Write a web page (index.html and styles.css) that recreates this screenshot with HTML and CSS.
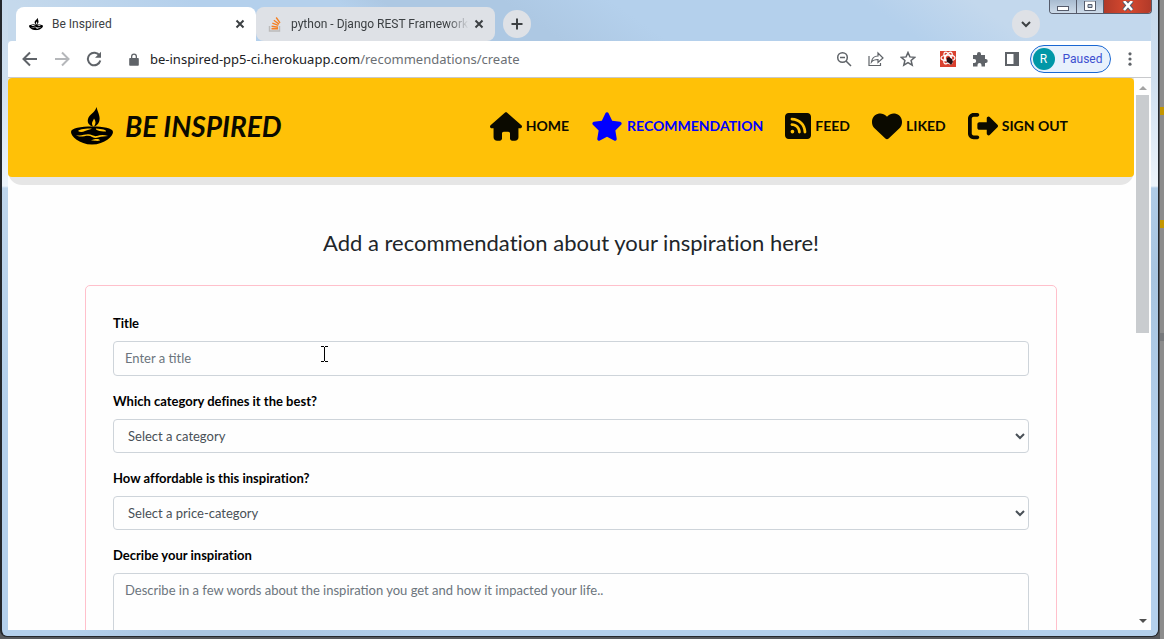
FILE: index.html
```html
<!DOCTYPE html>
<html lang="en">
<head>
<meta charset="utf-8">
<meta name="viewport" content="width=device-width, initial-scale=1">
<title>Be Inspired</title>
<link rel="stylesheet" href="styles.css">
</head>
<body>
<svg class="defs" aria-hidden="true">
  <symbol id="lamp" viewBox="0 0 42 38">
    <path d="M25.500 0C27 6 30 10 28 15c-1 2.500-3 4-5 4.500 2-3 2-5 0-8-.5 2-2 3-2 5 0 1.200.4 2 1 3-4-1-6-4-5-7.500C18 7.500 24 6 25.500 0Z"/>
    <path fill-rule="evenodd" d="M21 19.500C32 19.500 42 21 42 25c0 4-8 12.500-21 12.500S0 29 0 25c0-4 10-5.500 21-5.500ZM7 24c2 1.500 5 1 7 0 3-1.200 5-1.500 7-2.500-6 0-12 .5-14 2.500Zm18-2.500c-1 1.500 3 3 10 3 1-1.500-4-2.700-10-3ZM5 28c4 3 8 .8 12 .8s6 3.500 10 1.800c4-1.600 7-.8 10-1.600-5-1.500-8-.8-11 0s-5-1.700-9-1.700-7 2.200-12 .7Zm15 5.500c4 0 6 1 9 0-1-1.700-4-2-9 0Z"/>
  </symbol>
</svg>
<div class="window">
  <div class="tabstrip">
    <div class="tab active">
      <svg class="favicon lamp" viewBox="0 0 42 38"><use href="#lamp"/></svg>
      <span class="tab-title">Be Inspired</span>
      <button class="tab-close" aria-label="Close tab"><svg viewBox="0 0 10 10"><path d="M1.500 1.500l7 7M8.500 1.500l-7 7"/></svg></button>
    </div>
    <div class="tab">
      <svg class="favicon" viewBox="0 0 14 16"><path d="M1.500 10v5h10v-5" fill="none" stroke="#bcbbbb" stroke-width="1.400"/><path d="M3.500 12.800h6.500M3.600 10.200l6.400 1M4.300 7.200l6 2.200M5.800 4.300l5.300 3.800M8.200 1.500l3.800 5.400" fill="none" stroke="#f48024" stroke-width="1.400"/></svg>
      <span class="tab-title faded">python - Django REST Framework</span>
      <button class="tab-close" aria-label="Close tab"><svg viewBox="0 0 10 10"><path d="M1.500 1.500l7 7M8.500 1.500l-7 7"/></svg></button>
    </div>
    <button class="round new-tab" aria-label="New tab"><svg viewBox="0 0 12 12"><path d="M6 0.500v11M.5 6h11"/></svg></button>
    <button class="round tab-search" aria-label="Search tabs"><svg viewBox="0 0 12 12"><path d="M2 4l4 4 4-4"/></svg></button>
    <div class="caption">
      <button class="cap" aria-label="Minimize"><svg viewBox="0 0 12 12"><rect x=".5" y="5.500" width="11" height="4" fill="#fff" stroke="#555b6b"/></svg></button>
      <button class="cap" aria-label="Maximize"><svg viewBox="0 0 12 12"><path fill-rule="evenodd" d="M.5 0h11v9.500H.5ZM4 3.500v3h4v-3Z" fill="#fff" stroke="#555b6b"/></svg></button>
      <button class="cap close" aria-label="Close"><svg viewBox="0 0 12 12"><path d="M2 0l8 9M10 0l-8 9" stroke="#555b6b" stroke-width="4.500"/><path d="M2 0l8 9M10 0l-8 9" stroke="#fff" stroke-width="2.600"/></svg></button>
    </div>
  </div>

  <div class="toolbar">
    <button class="tool" aria-label="Back"><svg viewBox="0 0 16 16"><path class="line" d="M15 8H2M8 1.500L1.500 8 8 14.500"/></svg></button>
    <button class="tool dim" aria-label="Forward"><svg viewBox="0 0 16 16"><path class="line" d="M1 8h13M8 1.500L14.500 8 8 14.500"/></svg></button>
    <button class="tool" aria-label="Reload"><svg viewBox="0 0 16 16"><path class="line" d="M13.600 4.800A6.300 6.300 0 1 0 14.300 9.500"/><path d="M15 .8v6H9Z"/></svg></button>
    <div class="address">
      <svg class="lock" viewBox="0 0 10 13"><path fill-rule="evenodd" d="M2 5V3.500a3 3 0 0 1 6 0V5h1q.8 0 .8.800V12q0 .8-.8.800H1q-.8 0-.8-.8V5.800Q.2 5 1 5ZM3.300 5h3.400V3.500a1.700 1.700 0 0 0-3.400 0Z"/></svg>
      <span class="url">be-inspired-pp5-ci.herokuapp.com<span class="path">/recommendations/create</span></span>
    </div>
    <div class="actions">
      <button class="tool" aria-label="Zoom"><svg viewBox="0 0 16 16"><circle class="thin" cx="6.500" cy="6.500" r="4.800"/><path class="thin" d="M10 10l5 5M4 6.500h5"/></svg></button>
      <button class="tool" aria-label="Share"><svg viewBox="0 0 16 16"><path class="slim" d="M1 5v9.500h11.500V12M3.500 11c.5-4 3-6 6.500-6V2l5 5-5 4.500v-3C7 8.500 5 9 3.500 11Z"/></svg></button>
      <button class="tool" aria-label="Bookmark"><svg viewBox="0 0 16 16"><path class="thin" d="M8 1.500l1.900 4.400 4.800.4-3.600 3.200 1.100 4.700L8 11.700l-4.200 2.500 1.100-4.700L1.300 6.300l4.800-.4Z"/></svg></button>
      <button class="tool ext" aria-label="React tools"><svg viewBox="0 0 16 16"><path d="M0 0h16v16H0Z" fill="#d9412f"/><g fill="none" stroke="#fff" stroke-width="1.200"><ellipse cx="8" cy="7" rx="7" ry="2.800"/><ellipse cx="8" cy="7" rx="2.800" ry="6.500" transform="rotate(30 8 7)"/><ellipse cx="8" cy="7" rx="2.800" ry="6.500" transform="rotate(-30 8 7)"/></g><path d="M7 7l2-1 3 2 1 3-2 3-2-2-2.500-1Z" fill="#241014"/></svg></button>
      <button class="tool" aria-label="Extensions"><svg viewBox="0 0 16 16"><path d="M1 4h4V3a2 2 0 0 1 4 0v1h4v4h.7a2 2 0 0 1 0 4H13v3.500H9.500V14a2 2 0 0 0-4 0v1.500H1V12h1.200a2 2 0 0 0 0-4H1Z"/></svg></button>
      <button class="tool" aria-label="Side panel"><svg viewBox="0 0 16 16"><path fill-rule="evenodd" d="M1 1h14v14H1ZM3 3v10h6.500V3Z"/></svg></button>
      <button class="profile"><span class="avatar">R</span>Paused</button>
      <button class="tool menu" aria-label="Menu"><svg viewBox="0 0 16 16"><circle cx="8" cy="2.800" r="1.600"/><circle cx="8" cy="8" r="1.600"/><circle cx="8" cy="13.200" r="1.600"/></svg></button>
    </div>
  </div>

  <div class="viewport">
    <div class="page">
      <header class="site-header">
        <nav class="nav">
          <a class="brand" href="#"><svg viewBox="0 0 42 38"><use href="#lamp"/></svg><span>BE INSPIRED</span></a>
          <div class="links">
            <a href="#"><svg class="wide" viewBox="0 0 576 512"><path d="M575.800 255.500c0 18-15 32.100-32 32.100h-32l.7 160.200c.2 35.500-28.500 64.300-64 64.300H400c-22 0-40-18-40-40v-88c0-18-14-32-32-32h-80c-18 0-32 14-32 32v88c0 22-18 40-40 40h-48c-35 0-64-28-64-64V287.600H32c-18 0-32-14-32-32.100 0-9 3-17 10-24L266.400 8c7-7 15-8 22-8s15 2 21 7l255.400 224.500c8 7 12 15 11 24Z"/></svg>HOME</a>
            <a href="#" class="current"><svg class="wide" viewBox="0 0 576 512"><path d="M316.900 18C311.600 7 300.400 0 288.100 0s-23.400 7-28.800 18L195 150.300 51.400 171.500c-12 1.800-22 10.200-25.700 21.700s-.7 24.200 7.900 32.700L137.800 329l-24.600 145.700c-2 12 3 24.200 12.900 31.300s23 8 33.800 2.300l128.300-68.500 128.300 68.500c10.800 5.700 23.900 4.900 33.800-2.300s14.900-19.300 12.900-31.300L438.500 329l104.200-103.100c8.600-8.500 11.700-21.200 7.900-32.700s-13.700-19.900-25.700-21.700L381.200 150.300Z"/></svg>RECOMMENDATION</a>
            <a href="#"><svg class="narrow" viewBox="0 32 448 448"><path fill-rule="evenodd" d="M64 32C28.700 32 0 60.700 0 96v320c0 35.300 28.700 64 64 64h320c35.300 0 64-28.700 64-64V96c0-35.300-28.700-64-64-64ZM96 136c0-13.300 10.700-24 24-24 137 0 248 111 248 248 0 13.300-10.700 24-24 24s-24-10.700-24-24c0-110.500-89.500-200-200-200-13.300 0-24-10.700-24-24Zm0 96c0-13.300 10.700-24 24-24 83.900 0 152 68.100 152 152 0 13.300-10.700 24-24 24s-24-10.700-24-24c0-57.400-46.600-104-104-104-13.300 0-24-10.700-24-24Zm0 120a32 32 0 1 1 64 0 32 32 0 0 1-64 0Z"/></svg>FEED</a>
            <a href="#"><svg class="mid" viewBox="0 0 512 512"><path d="M47.600 300.400l180.700 168.700c7.500 7 17.400 10.900 27.700 10.900s20.200-3.900 27.700-10.900l180.700-168.700C494.800 272.100 512 232.400 512 190.900v-5.800c0-69.900-50.500-129.500-119.400-141C347 36.500 300.600 51.400 268 84l-12 12-12-12c-32.600-32.600-79-47.500-124.600-39.900C50.500 55.600 0 115.200 0 185.100v5.800c0 41.500 17.200 81.200 47.600 109.500Z"/></svg>LIKED</a>
            <a href="#"><svg class="mid" viewBox="0 0 512 512"><path d="M160 416H96c-17.700 0-32-14.300-32-32V128c0-17.700 14.300-32 32-32h64c17.700 0 32-14.300 32-32s-14.300-32-32-32H96C43 32 0 75 0 128v256c0 53 43 96 96 96h64c17.700 0 32-14.300 32-32s-14.300-32-32-32ZM502.600 278.600c12.500-12.500 12.500-32.800 0-45.300l-128-128c-20-20-54.600-6-54.600 22.700v64H192c-17.700 0-32 14.300-32 32v64c0 17.700 14.300 32 32 32h128v64c0 28.700 34.600 43 54.600 22.600Z"/></svg>SIGN OUT</a>
          </div>
        </nav>
      </header>
      <main>
        <h1>Add a recommendation about your inspiration here!</h1>
        <form class="card">
          <label for="title">Title</label>
          <input id="title" type="text" placeholder="Enter a title">
          <label for="category">Which category defines it the best?</label>
          <select id="category"><option>Select a category</option></select>
          <label for="price">How affordable is this inspiration?</label>
          <select id="price"><option>Select a price-category</option></select>
          <label for="about">Decribe your inspiration</label>
          <textarea id="about" rows="6" placeholder="Describe in a few words about the inspiration you get and how it impacted your life.."></textarea>
        </form>
      </main>
    </div>
    <div class="scrollbar">
      <svg class="up" viewBox="0 0 8 4"><path d="M0 4l4-4 4 4Z"/></svg>
      <div class="thumb"></div>
      <svg class="down" viewBox="0 0 8 4"><path d="M0 0l4 4 4-4Z"/></svg>
    </div>
  </div>
  <svg class="cursor" viewBox="0 0 7 16"><path d="M0 .5h3M4 .5h3M0 15.500h3M4 15.500h3M3.500 1v14"/></svg>
</div>
<div class="behind" aria-hidden="true"><i></i><i></i><i></i></div>
</body>
</html>
```

FILE: styles.css
```css
* { box-sizing: border-box; }
body {
  margin: 0;
  height: 100vh;
  display: flex;
  overflow: hidden;
  background: #57595d;
  font-family: Lato, "Open Sans", sans-serif;
  font-variant-ligatures: none;
}
button { border: 0; padding: 0; background: none; font: inherit; color: inherit; display: flex; align-items: center; justify-content: center; }
a { color: inherit; text-decoration: none; }
.defs { position: absolute; width: 0; height: 0; }

.window {
  flex: 1;
  min-width: 0;
  position: relative;
  display: flex;
  flex-direction: column;
  margin-bottom: 2px;
  padding: 0 7px 6px 6px;
  border: solid #24272c;
  border-width: 0 1px 1px 2px;
  border-radius: 0 0 7px 7px;
  background:
    linear-gradient(to bottom, #c6d9ec 0, #cfdfef 80px, #edf4fb 186px, transparent 188px),
    linear-gradient(125deg, #c3d8ec 0 5%, #b4d0ec 18% 32%, #abc6e2 38% 44%, #b4d0ec 55% 78%, #a8c5e0 84%, #b4d0ec 92%);
}
.behind { width: 5px; display: flex; flex-direction: column; gap: 105px; padding-top: 107px; background: #8c8c8c; border-left: 1px solid #55585c; }
.behind i { height: 8px; background: #c49600; }
.behind i:last-child { background: #77797c; }

/* Tabs */
.tabstrip {
  display: flex;
  align-items: flex-end;
  height: 41px;
  padding-left: 8px;
  font: 12px/16px Roboto, "Open Sans", sans-serif;
  color: #3c4043;
  background: linear-gradient(35deg, #c5d9ec 0 5%, #b4d0ec 20% 32%, #adc8e3 36% 46%, #b4d0ec 55% 76%, #c3d8ed 85%);
}
.tab { display: flex; align-items: center; width: 239px; height: 34px; padding: 0 10px 0 11px; border-radius: 8px; background: #dee1e6; }
.tab.active { width: 240px; padding-left: 12px; border-radius: 8px 8px 0 0; background: #fff; }
.favicon { width: 16px; height: 16px; flex: none; }
.favicon.lamp { padding: 1px; }
.tab-title { flex: 1; min-width: 0; margin: 0 4px 0 8px; white-space: nowrap; overflow: hidden; }
.tab-title.faded { mask-image: linear-gradient(to right, #000 88%, transparent); }
.tab-close { width: 12px; height: 12px; }
.tab-close svg { width: 10px; height: 10px; fill: none; stroke: #3c4043; stroke-width: 2; }
.round { width: 28px; height: 28px; margin-bottom: 3px; border-radius: 50%; background: #dee1e6; }
.round svg { width: 12px; height: 12px; fill: none; stroke: #3c4043; stroke-width: 2; }
.new-tab { margin-left: 8px; }
.tab-search { margin-left: auto; margin-right: 9px; }
.caption { display: flex; align-self: flex-start; width: 103px; height: 14px; margin-right: -1px; border: 1px solid #555b6b; border-top: 0; border-radius: 0 0 4px 4px; overflow: hidden; }
.cap { flex: 1; background: linear-gradient(#a8bbd0, #cddbe9); border-right: 1px solid #555b6b; }
.cap svg { width: 12px; height: 12px; fill: none; }
.cap.close { flex: 0 0 47px; border: 0; background: linear-gradient(to right, #b13a29, #d8492f 50%, #b13a29); }

/* Toolbar */
.toolbar { display: flex; align-items: center; height: 37px; padding: 0 13px 0 14px; gap: 16px; background: #fff; border-bottom: 1px solid #c8c9cc; color: #5f6368; border-radius: 4px 0 0 0; }
.tool { width: 16px; height: 16px; }
.tool svg { width: 16px; height: 16px; fill: currentColor; }
.tool.dim { color: #b5b7ba; }
.tool .line { fill: none; stroke: currentColor; stroke-width: 2; }
.tool .thin { fill: none; stroke: currentColor; stroke-width: 1.5; }
.tool .slim { fill: none; stroke: currentColor; stroke-width: 1.2; }
.address { flex: 1; display: flex; align-items: center; gap: 11px; margin-left: 11px; font: 13px/20px "Noto Sans", "Open Sans", sans-serif; }
.lock { width: 10px; height: 13px; fill: #5f6368; }
.url { color: #202124; white-space: nowrap; }
.path { color: #6b6f74; }
.actions { display: flex; align-items: center; gap: 16px; }
.ext { margin-left: 8px; }
.profile { height: 28px; width: 81px; margin: 0 -5px 0 -6px; padding: 0 8px 0 2px; gap: 8px; border: 1px solid #1967d2; border-radius: 14px; background: #e8f1fc; color: #3d4fd0; font: 12px/16px Roboto, "Open Sans", sans-serif; }
.avatar { width: 22px; height: 22px; flex: none; border-radius: 50%; background: #0097a7; color: #fff; line-height: 22px; }

/* Page */
.viewport { flex: 1; min-height: 0; display: flex; overflow: hidden; background: #fefefe; }
.page { flex: 1; min-width: 0; overflow: hidden; }
.site-header { padding-bottom: 8px; border-radius: 0 0 14px 14px; background: #e6e6e6; }
.nav { display: flex; justify-content: space-between; padding: 29px 66px 32px 63px; background: #ffc107; border-radius: 4px; color: #0b0a00; }
.brand { display: flex; align-items: center; gap: 12px; font-size: 28px; line-height: 38px; font-weight: 700; font-style: italic; white-space: nowrap; }
.brand svg { width: 42px; height: 38px; }
.links { display: flex; align-items: center; gap: 22px; font-size: 14px; line-height: 38px; font-weight: 700; white-space: nowrap; }
.links a { display: flex; align-items: center; gap: 4px; }
.links svg { height: 29px; fill: currentColor; }
.links .wide { width: 32px; }
.links .mid { width: 30px; height: 30px; }
.links .narrow { width: 26px; height: 26px; }
.links .current { color: #00f; }
main { padding: 0 77px; }
h1 { margin: 40px 0 25px; text-align: center; font-size: 22px; line-height: 35px; font-weight: 400; color: #212529; }
.card { display: flex; flex-direction: column; padding: 27px; border: 1px solid #ffc0cb; border-radius: 5px; }
.card label { margin-bottom: 8px; font-size: 13px; line-height: 20px; font-weight: 700; color: #000; }
.card input, .card select, .card textarea { width: 100%; margin: 0 0 15px; border: 1px solid #ced4da; border-radius: 4px; background: #fefefe; font: 13px/20px Lato, sans-serif; color: #495057; }
.card input { height: 35px; padding: 0 11px 2px; }
.card select { height: 34px; padding: 0 10px; }
.card textarea { padding: 6px 11px; resize: none; }
::placeholder { color: #6c757d; opacity: 1; }

.scrollbar { width: 17px; display: flex; flex-direction: column; align-items: center; padding: 8px 0 7px; }
.scrollbar svg { width: 8px; height: 4px; }
.up { fill: #a3a3a3; }
.down { fill: #505050; margin-top: auto; }
.thumb { width: 13px; height: 238px; margin-top: 5px; background: #c9cccf; }
.cursor { position: absolute; left: 319px; top: 346px; width: 7px; height: 16px; fill: none; stroke: #000; stroke-width: 1; }
```
